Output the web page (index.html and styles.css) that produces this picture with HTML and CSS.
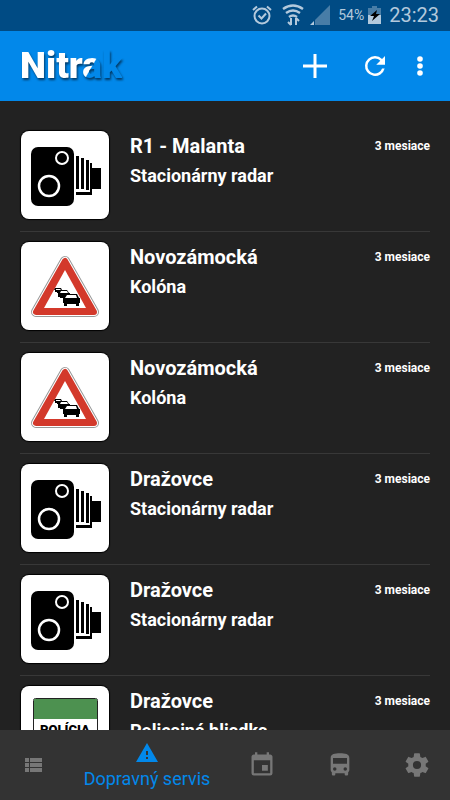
FILE: index.html
```html
<!DOCTYPE html>
<html lang="sk">
<head>
    <meta charset="utf-8">
    <meta name="viewport" content="width=device-width, initial-scale=1">
    <title>Nitrak</title>
    <link rel="stylesheet" href="styles.css">
</head>
<body>
    <!-- Shared road signs -->
    <svg class="symbols" aria-hidden="true">
        <symbol id="sign-radar" viewBox="0 0 88 88">
            <rect x="10" y="16" width="43" height="59" rx="7"/>
            <circle cx="41" cy="27" r="6" fill="none" stroke="#fff" stroke-width="2"/>
            <circle cx="28" cy="55" r="10" fill="none" stroke="#fff" stroke-width="2.5"/>
            <path d="M55 25h3v33h-3zM60 27h3v31h-3zM65 29h3v30h-3zM69 32h2v32H55v-3h14zM71 37h9v21h-9z"/>
        </symbol>
        <symbol id="sign-queue" viewBox="0 0 88 88">
            <path d="M44 19L15 70h58z" fill="#999" stroke="#999" stroke-width="10" stroke-linejoin="round"/>
            <path d="M44 19L15 70h58z" fill="#fff" stroke="#fff" stroke-width="8" stroke-linejoin="round"/>
            <path d="M44 19L15 70h58z" fill="#d3392b" stroke="#d3392b" stroke-width="6" stroke-linejoin="round"/>
            <path d="M44 28L23 66h42z" fill="#fff"/>
            <path d="M34 46h6l1 2v3h-5v-1h-2v-2h-1z"/>
            <path d="M35 47h4l1 1h-5z" fill="#fff"/>
            <path d="M39 48h7l2 3h1v3h-3v2h-7v-1h-2v-4h1z"/>
            <path d="M40 49h6l1 2h-8z" fill="#fff"/>
            <path d="M45 52h11l2 4h1v5h-1v3h-3v-2h-9v2h-3v-3h-1v-5h1z"/>
            <path d="M46 53h9l1 3H44z" fill="#fff"/>
        </symbol>
    </svg>

    <div class="status-bar">
        <svg class="alarm" viewBox="0 0 20 20">
            <g fill="none" stroke="currentColor" stroke-width="2">
                <circle cx="10" cy="11" r="7.500"/>
                <path d="M1 5l4-3.500M19 5l-4-3.500M6.500 10.500l3 3 4.500-5"/>
            </g>
        </svg>
        <svg class="wifi" viewBox="0 0 22 22">
            <g fill="none" stroke="currentColor" stroke-width="2.400">
                <path d="M1 5q10-7 20 0M4 9q7-5 14 0M7 13q4-3 8 0"/>
                <path d="M9 14v7M6 18l3 3M14 21v-7M17 17l-3-3" stroke-width="2"/>
            </g>
        </svg>
        <svg class="signal" viewBox="0 0 20 20">
            <path d="M20 0v20H5V15z" opacity=".4"/>
            <path d="M4 16v4H0z"/>
        </svg>
        <span class="percent">54%</span>
        <svg class="battery" viewBox="0 0 13 18">
            <path d="M4 0h5v2h4v7H0V2h4z" opacity=".4"/>
            <path d="M0 9h13v9H0z"/>
            <path d="M9 4l-7 6h4l-2 5 8-7H8z" fill="#000"/>
        </svg>
        <span class="clock">23:23</span>
    </div>

    <header class="header">
        <h1 class="logo">Nitrak</h1>
        <button class="add" aria-label="Pridať">
            <svg viewBox="0 0 24 24"><path d="M10.500 0h3v10.500H24v3H13.500V24h-3V13.500H0v-3h10.500z"/></svg>
        </button>
        <button class="refresh" aria-label="Obnoviť">
            <svg viewBox="0 0 24 24"><path d="M17.650 6.350A7.960 7.960 0 0 0 12 4a8 8 0 1 0 7.730 10h-2.080A6 6 0 1 1 12 6c1.660 0 3.140.690 4.220 1.780L13 11h7V4z"/></svg>
        </button>
        <button class="more" aria-label="Viac">
            <svg viewBox="0 0 6 20"><circle cx="3" cy="3" r="2.800"/><circle cx="3" cy="10" r="2.800"/><circle cx="3" cy="17" r="2.800"/></svg>
        </button>
    </header>

    <main class="reports">
        <article class="report">
            <svg class="sign"><use href="#sign-radar"/></svg>
            <div class="info">
                <h2>R1 - Malanta</h2>
                <p>Stacionárny radar</p>
            </div>
            <span class="time">3 mesiace</span>
        </article>
        <article class="report">
            <svg class="sign"><use href="#sign-queue"/></svg>
            <div class="info">
                <h2>Novozámocká</h2>
                <p>Kolóna</p>
            </div>
            <span class="time">3 mesiace</span>
        </article>
        <article class="report">
            <svg class="sign"><use href="#sign-queue"/></svg>
            <div class="info">
                <h2>Novozámocká</h2>
                <p>Kolóna</p>
            </div>
            <span class="time">3 mesiace</span>
        </article>
        <article class="report">
            <svg class="sign"><use href="#sign-radar"/></svg>
            <div class="info">
                <h2>Dražovce</h2>
                <p>Stacionárny radar</p>
            </div>
            <span class="time">3 mesiace</span>
        </article>
        <article class="report">
            <svg class="sign"><use href="#sign-radar"/></svg>
            <div class="info">
                <h2>Dražovce</h2>
                <p>Stacionárny radar</p>
            </div>
            <span class="time">3 mesiace</span>
        </article>
        <article class="report">
            <svg class="sign" viewBox="0 0 88 88">
                <rect x="12.500" y="12.500" width="64" height="64" rx="2" fill="#fff" stroke="#222"/>
                <path d="M13 13h63v20H13z" fill="#4d9150"/>
                <text x="44" y="48" text-anchor="middle" class="sign-text">POLÍCIA</text>
            </svg>
            <div class="info">
                <h2>Dražovce</h2>
                <p>Policajná hliadka</p>
            </div>
            <span class="time">3 mesiace</span>
        </article>
    </main>

    <nav class="tabs">
        <a href="#spravy" aria-label="Správy">
            <svg viewBox="0 0 24 24"><path d="M4 14h4v-4H4v4zm0 5h4v-4H4v4zM4 9h4V5H4v4zm5 5h12v-4H9v4zm0 5h12v-4H9v4zM9 5v4h12V5H9z"/></svg>
        </a>
        <a href="#doprava" class="active">
            <svg viewBox="0 0 24 24"><path d="M1 21h22L12 2 1 21zm12-3h-2v-2h2v2zm0-4h-2v-4h2v4z"/></svg>
            <span>Dopravný servis</span>
        </a>
        <a href="#podujatia" class="large" aria-label="Podujatia">
            <svg viewBox="0 0 24 24"><path d="M17 12h-5v5h5v-5zM16 1v2H8V1H6v2H5c-1.110 0-2 .900-2 2v14a2 2 0 0 0 2 2h14a2 2 0 0 0 2-2V5c0-1.100-.900-2-2-2h-1V1h-2zm3 18H5V8h14v11z"/></svg>
        </a>
        <a href="#mhd" class="large" aria-label="MHD">
            <svg viewBox="0 0 24 24"><path d="M4 16c0 .880.390 1.670 1 2.220V20a1 1 0 0 0 1 1h1a1 1 0 0 0 1-1v-1h8v1a1 1 0 0 0 1 1h1a1 1 0 0 0 1-1v-1.780c.610-.550 1-1.340 1-2.220V6c0-3.500-3.580-4-8-4s-8 .500-8 4v10zm3.500 1a1.500 1.500 0 1 1 0-3 1.500 1.500 0 0 1 0 3zm9 0a1.500 1.500 0 1 1 0-3 1.500 1.500 0 0 1 0 3zm1.500-6H6V6h12v5z"/></svg>
        </a>
        <a href="#nastavenia" class="large" aria-label="Nastavenia">
            <svg viewBox="0 0 24 24"><path d="M19.430 12.980c.040-.320.070-.640.070-.980s-.030-.660-.070-.980l2.110-1.650c.190-.150.240-.420.120-.640l-2-3.460c-.120-.220-.390-.300-.610-.220l-2.490 1c-.520-.400-1.080-.730-1.690-.980l-.380-2.650A.488.488 0 0 0 14 2h-4c-.250 0-.460.180-.490.420l-.380 2.650c-.610.250-1.170.590-1.690.980l-2.490-1c-.230-.090-.490 0-.610.220l-2 3.460c-.130.220-.070.490.120.640l2.110 1.650c-.040.320-.070.650-.070.980s.030.660.070.980l-2.110 1.650c-.190.150-.240.420-.120.640l2 3.460c.120.220.390.300.610.220l2.490-1c.520.400 1.080.730 1.690.980l.380 2.650c.030.240.240.420.490.420h4c.250 0 .460-.180.490-.420l.380-2.650c.610-.250 1.170-.590 1.690-.980l2.490 1c.230.090.490 0 .610-.220l2-3.460c.120-.220.070-.490-.120-.640l-2.110-1.650zM12 15.500a3.500 3.500 0 1 1 0-7 3.500 3.500 0 0 1 0 7z"/></svg>
        </a>
    </nav>
</body>
</html>
```
FILE: styles.css
```css
* {
    box-sizing: border-box;
}

body {
    display: flex;
    flex-direction: column;
    height: 100vh;
    margin: 0;
    font-family: Roboto, sans-serif;
    background-color: #222;
    color: #fff;
}

h1, h2, p {
    margin: 0;
}

svg {
    display: block;
    fill: currentColor;
}

.symbols {
    position: absolute;
    width: 0;
    height: 0;
}

/* Status bar */
.status-bar {
    display: flex;
    flex: none;
    align-items: center;
    justify-content: flex-end;
    height: 31px;
    padding: 0 11px 2px 0;
    background-color: #004b84;
    color: #b3c9dc;
}

.alarm {
    width: 20px;
    height: 20px;
    margin-right: 10px;
}

.wifi {
    width: 22px;
    height: 22px;
    margin-right: 6px;
}

.signal {
    width: 20px;
    height: 20px;
    margin-right: 8px;
}

.percent {
    font-size: 14px;
    margin-right: 4px;
}

.battery {
    width: 13px;
    height: 18px;
    margin-right: 8px;
}

.clock {
    font-size: 20px;
}

/* Header */
.header {
    display: flex;
    flex: none;
    align-items: center;
    height: 70px;
    padding: 0 20px;
    background-color: #0288ea;
}

.logo {
    margin-right: auto;
    font-size: 37px;
    font-weight: 900;
    line-height: 46px;
    color: transparent;
    background: linear-gradient(120deg, #fff 66%, #0288ea 67%);
    -webkit-background-clip: text;
    background-clip: text;
    filter: drop-shadow(1px 2px 1px #023a66);
}

.header button {
    padding: 0;
    border: none;
    background: none;
    color: #fff;
    cursor: pointer;
}

.add svg {
    width: 24px;
    height: 24px;
}

.refresh {
    margin: 0 27px 0 33px;
}

.refresh svg {
    width: 30px;
    height: 30px;
}

.more {
    margin-right: 7px;
}

.more svg {
    width: 6px;
    height: 20px;
}

/* List of reports */
.reports {
    flex: 1;
    min-height: 0;
    padding: 20px 20px 0;
    overflow: hidden;
}

.report {
    display: flex;
    align-items: flex-start;
    padding: 10px 0 12px;
    border-bottom: 1px solid #383838;
}

.sign {
    flex: none;
    width: 88px;
    height: 88px;
    margin: 0 21px 0 1px;
    border-radius: 8px;
    background-color: #fff;
    color: #000;
    box-shadow: 0 0 1px 1px #000;
}

.sign-text {
    font-size: 13px;
    font-weight: 900;
}

.info {
    flex: 1;
}

.info h2 {
    font-size: 20px;
    font-weight: 700;
    line-height: 30px;
}

.info p {
    font-size: 18px;
    font-weight: 700;
    line-height: 30px;
}

.time {
    font-size: 12px;
    font-weight: 700;
    line-height: 30px;
}

/* Bottom tabs */
.tabs {
    display: grid;
    flex: none;
    grid-template-columns: 66fr 162fr 68fr 88fr 66fr;
    height: 70px;
    background-color: #333;
}

.tabs a {
    display: flex;
    flex-direction: column;
    align-items: center;
    justify-content: center;
    color: #777;
    text-decoration: none;
}

.tabs svg {
    width: 24px;
    height: 24px;
}

.tabs .large svg {
    width: 28px;
    height: 28px;
}

.tabs .active {
    padding-top: 4px;
    color: #0288ea;
    font-size: 18px;
    line-height: 28px;
}
```
